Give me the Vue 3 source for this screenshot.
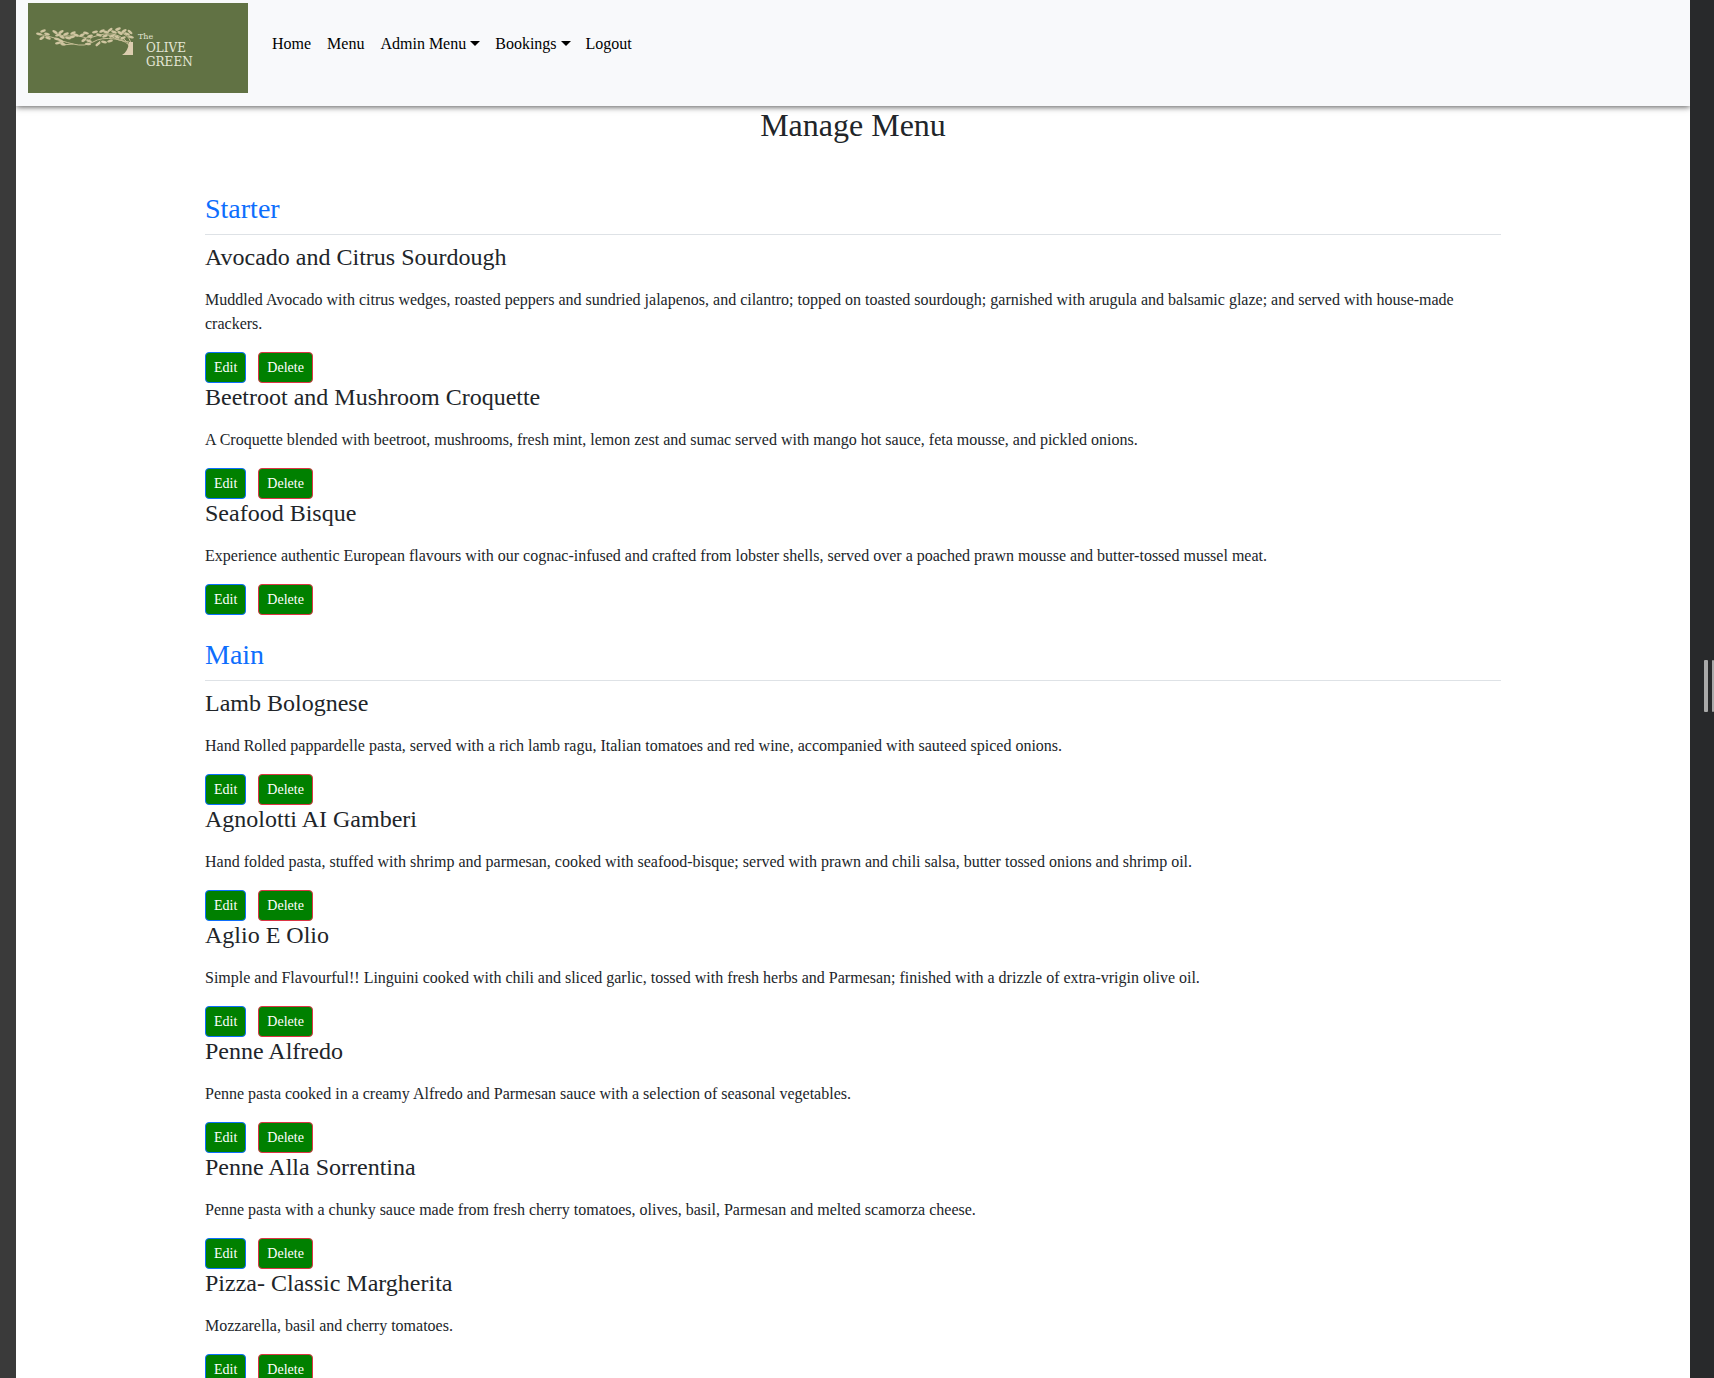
<script setup>
const sections = [
  {
    title: 'Starter',
    items: [
      { name: 'Avocado and Citrus Sourdough', text: 'Muddled Avocado with citrus wedges, roasted peppers and sundried jalapenos, and cilantro; topped on toasted sourdough; garnished with arugula and balsamic glaze; and served with house-made crackers.' },
      { name: 'Beetroot and Mushroom Croquette', text: 'A Croquette blended with beetroot, mushrooms, fresh mint, lemon zest and sumac served with mango hot sauce, feta mousse, and pickled onions.' },
      { name: 'Seafood Bisque', text: 'Experience authentic European flavours with our cognac-infused and crafted from lobster shells, served over a poached prawn mousse and butter-tossed mussel meat.' },
    ],
  },
  {
    title: 'Main',
    items: [
      { name: 'Lamb Bolognese', text: 'Hand Rolled pappardelle pasta, served with a rich lamb ragu, Italian tomatoes and red wine, accompanied with sauteed spiced onions.' },
      { name: 'Agnolotti AI Gamberi', text: 'Hand folded pasta, stuffed with shrimp and parmesan, cooked with seafood-bisque; served with prawn and chili salsa, butter tossed onions and shrimp oil.' },
      { name: 'Aglio E Olio', text: 'Simple and Flavourful!! Linguini cooked with chili and sliced garlic, tossed with fresh herbs and Parmesan; finished with a drizzle of extra-vrigin olive oil.' },
      { name: 'Penne Alfredo', text: 'Penne pasta cooked in a creamy Alfredo and Parmesan sauce with a selection of seasonal vegetables.' },
      { name: 'Penne Alla Sorrentina', text: 'Penne pasta with a chunky sauce made from fresh cherry tomatoes, olives, basil, Parmesan and melted scamorza cheese.' },
      { name: 'Pizza- Classic Margherita', text: 'Mozzarella, basil and cherry tomatoes.' },
    ],
  },
]

const links = [
  { label: 'Home' },
  { label: 'Menu' },
  { label: 'Admin Menu', dropdown: true },
  { label: 'Bookings', dropdown: true },
  { label: 'Logout' },
]

// Leaf positions: x, y, rotation
const leaves = [
  [11, 31, 10], [15, 28, -20], [19, 31, 15], [14, 35, -30], [20, 35, 20], [27, 29, 30], [30, 32, -15], [33, 29, -30],
  [29, 36, 10], [34, 34, 25], [38, 31, -20], [40, 35, 10], [45, 30, -25], [48, 32, 20], [44, 34, -10],
  [30, 40, -10], [35, 41, 15], [33, 38, 30], [54, 32, -25], [58, 30, 15], [62, 33, -15], [61, 38, 20], [56, 37, -30], [60, 41, 5],
  [67, 29, -10], [71, 32, 20], [74, 28, -25], [78, 29, 15], [77, 33, -20], [82, 27, -35], [86, 29, 20], [90, 26, -20],
  [92, 30, 30], [96, 28, -30], [99, 31, 20], [102, 29, 40], [103, 34, 15], [84, 33, -20], [89, 34, 25], [95, 35, -25],
  [70, 41, -35], [76, 39, 10], [82, 38, -15],
]
</script>

<template>
  <div class="frame">
    <div class="page">
      <header class="navbar">
        <a class="brand" href="#" aria-label="The Olive Green">
          <svg class="logo" viewBox="0 0 220 90" aria-hidden="true">
            <rect width="220" height="90" fill="#617244" />
            <g fill="none" stroke="#c5bd95" stroke-linecap="round">
              <path d="M102 44Q100 38 87 36Q73 34 65 39T45 41T29 36T10 31" />
              <path d="M102 44Q98 34 85 31Q76 30 68 33T55 34T43 33T29 31M103 42Q103 35 96 31L88 27M101 39L91 37L80 32M60 39L64 34M45 41L34 42M72 38L69 43" />
            </g>
            <g fill="#cfc5a0">
              <ellipse v-for="(l, i) in leaves" :key="i" :cx="l[0]" :cy="l[1]" rx="3" ry="1.3" :transform="`rotate(${l[2]} ${l[0]} ${l[1]})`" />
            </g>
            <path d="M101 39h4v13h-11q6-3 7-13z" fill="#dccdaf" />
            <g class="wordmark">
              <text class="the" x="110" y="36">The</text>
              <text x="118" y="49">OLIVE</text>
              <text x="118" y="63">GREEN</text>
            </g>
          </svg>
        </a>
        <nav>
          <a v-for="link in links" :key="link.label" href="#">{{ link.label }}<i v-if="link.dropdown" class="caret"></i></a>
        </nav>
      </header>

      <main>
        <h1>Manage Menu</h1>
        <section v-for="section in sections" :key="section.title">
          <h2>{{ section.title }}</h2>
          <article v-for="item in section.items" :key="item.name">
            <h3>{{ item.name }}</h3>
            <p>{{ item.text }}</p>
            <div class="actions">
              <button type="button" class="edit">Edit</button>
              <button type="button" class="delete">Delete</button>
            </div>
          </article>
        </section>
      </main>
    </div>
    <div class="handle"><span></span><span></span></div>
  </div>
</template>

<style>
body {
  margin: 0;
  background: #28292b;
}
</style>

<style scoped>
.frame {
  height: 100vh;
  overflow: hidden;
  display: flex;
  border-left: 16px solid #3a3a3a;
  box-sizing: border-box;
  font: 16px/24px "Liberation Serif", "Times New Roman", serif;
  color: #212529;
}
.page {
  flex: 1;
  min-width: 0;
  overflow: hidden;
  background: #fff;
}
.handle {
  width: 24px;
  display: flex;
  align-items: center;
  justify-content: flex-end;
  gap: 4px;
  padding-bottom: 6px;
  background: #28292b;
}
.handle span {
  width: 4px;
  height: 52px;
  border-radius: 1px;
  background: #a9a9a9;
}
.handle span:last-child {
  width: 2px;
}
.navbar {
  display: flex;
  align-items: flex-start;
  gap: 16px;
  padding: 3px 12px 13px;
  background: #f8f9fb;
  box-shadow: 0 1px 6px #000a;
}
.brand {
  display: flex;
}
.logo {
  width: 220px;
  height: 90px;
}
.wordmark {
  fill: #e4e6d6;
  font: 12px "DejaVu Serif", serif;
}
.wordmark .the {
  font-size: 8px;
}
nav {
  display: flex;
  padding-top: 21px;
}
nav a {
  display: flex;
  align-items: center;
  gap: 4px;
  padding: 8px;
  color: #000;
  text-decoration: none;
}
.caret {
  border: 5px solid transparent;
  border-top-color: #000;
  border-bottom: 0;
  margin: 0 -1px 2px 0;
}
main {
  max-width: 1296px;
  margin: 0 auto;
  padding: 0 12px;
}
h1, h2, h3, p {
  margin: 0;
  font-weight: 400;
}
h1 {
  font-size: 32px;
  line-height: 38px;
  margin-bottom: 48px;
  text-align: center;
}
section {
  margin-bottom: 23px;
}
h2 {
  font-size: 28px;
  line-height: 34px;
  padding-bottom: 8px;
  margin-bottom: 8px;
  border-bottom: 1px solid #dee2e6;
  color: #0d6efd;
}
h3 {
  font-size: 24px;
  line-height: 29px;
}
p {
  margin: 16px 0;
}
.actions {
  display: flex;
  gap: 12px;
}
button {
  padding: 4px 8px;
  border: 1px solid #0d6efd;
  border-radius: 4px;
  background: green;
  color: #fff;
  font: 14px/21px "Liberation Serif", "Times New Roman", serif;
}
.delete {
  border-color: #dc3545;
}
</style>
